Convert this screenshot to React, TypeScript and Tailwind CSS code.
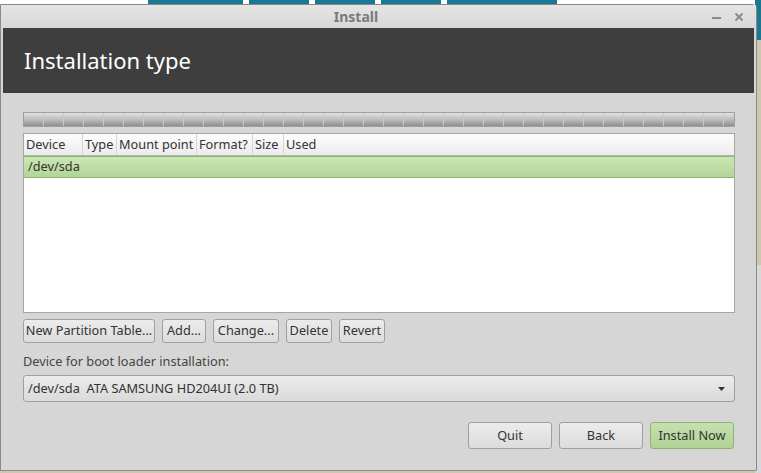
import React from "react";

const font = { fontFamily: '"Noto Sans", "DejaVu Sans", sans-serif' };

function Btn({ children, w, green }: { children: React.ReactNode; w?: string; green?: boolean }) {
  return (
    <div
      className={
        "flex h-[24px] shrink-0 items-center justify-center overflow-hidden whitespace-nowrap rounded-[3px] border text-[12.75px] text-[#333] " +
        (green
          ? "border-[#8fb66e] bg-gradient-to-b from-[#c6e0ae] to-[#b2d294]"
          : "border-[#a0a0a0] bg-gradient-to-b from-[#ececec] to-[#dcdcdc]") +
        " " +
        (w || "px-[4px]")
      }
    >
      {children}
    </div>
  );
}

export default function App() {
  const segs = Array.from({ length: 36 });
  return (
    <div className="relative h-[473px] w-[761px] overflow-hidden bg-[#cfc6b0]" style={font}>
      {/* background page strip */}
      <div className="absolute left-0 top-0 flex h-[6px] w-[761px] bg-white">
        <div className="ml-[148px] h-full w-[95px] bg-[#1b7892]" />
        <div className="ml-[6px] h-full w-[60px] bg-[#1b7892]" />
        <div className="ml-[6px] h-full w-[60px] bg-[#1b7892]" />
        <div className="ml-[6px] h-full w-[60px] bg-[#1b7892]" />
        <div className="ml-[6px] h-full w-[110px] bg-[#1b7892]" />
      </div>
      <div className="absolute right-0 top-[265px] h-[208px] w-[6px] bg-[#d8d8d8]" />
      <div className="absolute right-0 top-0 h-[40px] w-[6px] bg-[#1b7892]" />

      {/* window */}
      <div className="absolute left-0 top-[4px] flex h-[467px] w-[757px] flex-col rounded-tr-[5px] border border-[#8a8a8a] bg-[#d6d6d6]">
        {/* title bar */}
        <div className="relative flex h-[23px] items-center justify-center bg-gradient-to-b from-[#e4e4e4] to-[#d9d9d9] pr-[45px]">
          <span className="text-[14px] font-bold text-[#7a7a7a]">Install</span>
          <div className="absolute right-[35px] top-[12px] h-[2px] w-[9px] bg-[#8a8a8a]" />
          <svg className="absolute right-[12px] top-[7px]" width="10" height="10" viewBox="0 0 10 10">
            <path d="M1.5 1.5 L8.5 8.5 M8.5 1.5 L1.5 8.5" stroke="#8a8a8a" strokeWidth="2" />
          </svg>
        </div>
        {/* header */}
        <div className="mx-[2px] flex h-[65px] items-center bg-[#3e3e3e] pl-[21px]">
          <span className="text-[22px] text-white">Installation type</span>
        </div>
        {/* body */}
        <div className="flex flex-1 flex-col px-[22px] pt-[19px]">
          <div className="flex h-[15px] w-[712px] overflow-hidden border border-[#a0a0a0] bg-gradient-to-b from-[#e2e2e2] via-[#bdbdbd] to-[#8e8e8e]">
            {segs.map((_, i) => (
              <div key={i} className="h-full w-[20px] shrink-0 border-r border-[#c8c8c8]" />
            ))}
          </div>
          <div className="mt-[6px] flex h-[180px] w-[712px] flex-col border border-[#a6a6a6] bg-white">
            <div className="flex h-[22px] border-b border-[#b4b4b4] bg-gradient-to-b from-[#fdfdfd] to-[#ececec] text-[12.75px] text-[#333]">
              <div className="flex w-[59px] items-center border-r border-[#d6d6d6] pl-[2px]">Device</div>
              <div className="flex w-[34px] items-center border-r border-[#d6d6d6] pl-[2px]">Type</div>
              <div className="flex w-[80px] items-center border-r border-[#d6d6d6] pl-[2px]">Mount point</div>
              <div className="flex w-[56px] items-center border-r border-[#d6d6d6] pl-[2px]">Format?</div>
              <div className="flex w-[31px] items-center border-r border-[#d6d6d6] pl-[2px]">Size</div>
              <div className="flex items-center pl-[2px]">Used</div>
            </div>
            <div className="flex h-[22px] items-center border-y border-[#8cb870] bg-gradient-to-b from-[#cbe6b4] to-[#b2d598] pl-[4px] text-[12.75px] text-[#333]">
              /dev/sda
            </div>
          </div>
          <div className="mt-[6px] flex gap-[7px]">
            <Btn w="w-[132px]">New Partition Table...</Btn>
            <Btn w="w-[44px]">Add...</Btn>
            <Btn w="w-[66px]">Change...</Btn>
            <Btn w="w-[46px]">Delete</Btn>
            <Btn w="w-[46px]">Revert</Btn>
          </div>
          <div className="mt-[9px] text-[12.75px] text-[#444]">Device for boot loader installation:</div>
          <div className="mt-[4px] flex h-[27px] w-[712px] items-center justify-between rounded-[3px] border border-[#a0a0a0] bg-gradient-to-b from-[#ebebeb] to-[#dadada] pl-[4px] pr-[9px] text-[12.75px] text-[#333]">
            <span style={{ whiteSpace: "pre" }}>/dev/sda  ATA SAMSUNG HD204UI (2.0 TB)</span>
            <svg width="7" height="4" viewBox="0 0 7 4">
              <path d="M0 0 L7 0 L3.5 4 Z" fill="#333" />
            </svg>
          </div>
          <div className="mt-[20px] flex justify-end gap-[7px] pr-[0px]">
            <Btn w="w-[84px] h-[27px]">Quit</Btn>
            <Btn w="w-[84px] h-[27px]">Back</Btn>
            <Btn w="w-[84px] h-[27px]" green>
              Install Now
            </Btn>
          </div>
        </div>
      </div>
    </div>
  );
}
